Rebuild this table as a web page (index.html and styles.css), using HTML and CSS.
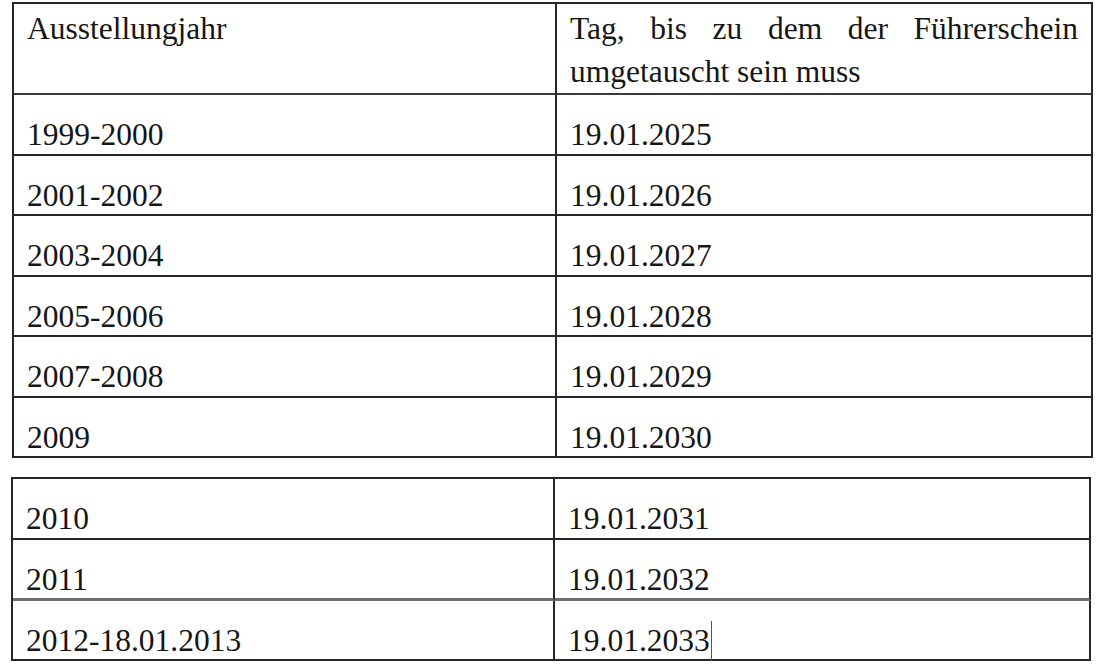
FILE: index.html
```html
<!DOCTYPE html>
<html lang="de">
<head>
<meta charset="utf-8">
<title>Führerschein Umtausch</title>
<link rel="stylesheet" href="styles.css">
</head>
<body>
<main class="sheet">
  <table class="grid grid-a">
    <tr class="head">
      <td class="c1">Ausstellungjahr</td>
      <td class="c2 just">Tag, bis zu dem der Führerschein umgetauscht sein muss</td>
    </tr>
    <tr><td class="c1">1999-2000</td><td class="c2">19.01.2025</td></tr>
    <tr><td class="c1">2001-2002</td><td class="c2">19.01.2026</td></tr>
    <tr><td class="c1">2003-2004</td><td class="c2">19.01.2027</td></tr>
    <tr><td class="c1">2005-2006</td><td class="c2">19.01.2028</td></tr>
    <tr><td class="c1">2007-2008</td><td class="c2">19.01.2029</td></tr>
    <tr><td class="c1">2009</td><td class="c2">19.01.2030</td></tr>
  </table>
  <table class="grid grid-b">
    <tr><td class="c1">2010</td><td class="c2">19.01.2031</td></tr>
    <tr class="grey"><td class="c1">2011</td><td class="c2">19.01.2032</td></tr>
    <tr><td class="c1">2012-18.01.2013</td><td class="c2">19.01.2033<span class="caret"></span></td></tr>
  </table>
</main>
</body>
</html>
```

FILE: styles.css
```css
html, body {
  margin: 0;
  padding: 0;
  background: #ffffff;
}

.sheet {
  padding-top: 2px;
  font-family: "Liberation Serif", "Times New Roman", serif;
  font-size: 31.5px;
  color: #161616;
}

.grid {
  border-collapse: separate;
  border-spacing: 0;
  table-layout: fixed;
  border-top: 2px solid #262626;
  border-left: 2px solid #262626;
}

.grid td {
  box-sizing: border-box;
  border-right: 2px solid #262626;
  border-bottom: 2px solid #262626;
  padding: 22px 13px 0.5px 13px;
  line-height: 36px;
  vertical-align: top;
  white-space: nowrap;
}

.grid-a {
  margin-left: 12px;
  width: 1081px;
}

.grid-a .c1 { width: 543px; }
.grid-a .c2 { width: 536px; }

.grid-b {
  margin-left: 11px;
  margin-top: 19px;
  width: 1080px;
}

.grid-b .c1 { width: 542px; }
.grid-b .c2 { width: 536px; }

.grid .head td {
  padding-top: 3px;
  padding-bottom: 0;
  line-height: 43px;
  border-bottom-color: #3a3a3a;
}

.grid .head .just {
  white-space: normal;
  text-align: justify;
}

.grid .grey td {
  border-bottom: 3px solid #6f6f6f;
  padding-bottom: 0;
}

.caret {
  display: inline-block;
  width: 1px;
  height: 40px;
  margin-top: -5px;
  margin-bottom: -10px;
  margin-left: 1px;
  background: #555555;
}
```
